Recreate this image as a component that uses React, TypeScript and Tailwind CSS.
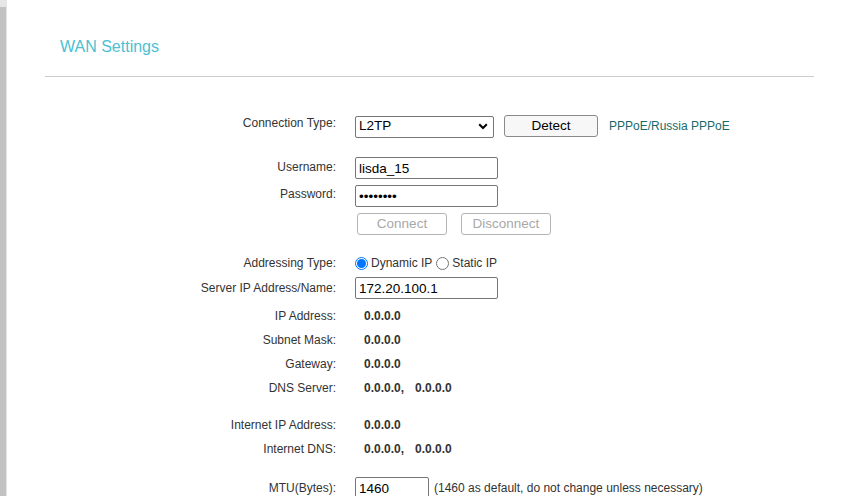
import React from "react";

const font = { fontFamily: '"Liberation Sans", Arial, sans-serif' };

function Row({
    label,
    h,
    labelClass = "",
    children,
}: {
    label: string;
    h: string;
    labelClass?: string;
    children?: React.ReactNode;
}) {
    return (
        <div className={`flex items-center ${h}`}>
            <div className={`w-[291px] shrink-0 text-right text-[12px] text-[#333] ${labelClass}`}>{label}</div>
            <div className="ml-[19px] flex items-center">{children}</div>
        </div>
    );
}

function TextBox({ value, w = "w-[143px]", type = "text" }: { value: string; w?: string; type?: string }) {
    return (
        <input
            readOnly
            type={type}
            defaultValue={value}
            style={font}
            className={`${w} h-[22px] rounded-[2px] border border-[#767676] bg-white px-[3px] text-[13.5px] text-black outline-none`}
        />
    );
}

function Radio({ checked, label }: { checked?: boolean; label: string }) {
    return (
        <label className="flex items-center text-[12px] text-[#333]">
            {checked ? (
                <span className="mr-[3px] flex h-[13px] w-[13px] items-center justify-center rounded-full border border-[#0075ff]">
                    <span className="h-[9px] w-[9px] rounded-full bg-[#0075ff]" />
                </span>
            ) : (
                <span className="mr-[3px] h-[13px] w-[13px] rounded-full border border-[#767676] bg-white" />
            )}
            {label}
        </label>
    );
}

function Value({ children }: { children: React.ReactNode }) {
    return <span className="pl-[9px] text-[12px] font-bold text-[#333]">{children}</span>;
}

export default function App() {
    return (
        <div className="flex h-[496px] w-[841px] overflow-hidden bg-white" style={font}>

            <div className="flex w-[7px] shrink-0 flex-col">
                <div className="h-[7px] bg-[#e6e6e6]" />
                <div className="flex flex-1">
                    <div className="w-[6px] bg-[#c2c2c2]" />
                    <div className="w-[1px] bg-[#e3e3e3]" />
                </div>
            </div>

            <div className="ml-[38px] w-[769px]">

                <h1 className="pl-[15px] pt-[37px] text-[16px] leading-[20px] text-[#4cbfd2]">WAN Settings</h1>

                <div className="mt-[19px] h-px bg-[#cccccc]" />

                <div className="pt-[36px]">

                    <Row label="Connection Type:" h="h-[27px]" labelClass="mb-[7px]">
                        <div className="flex h-[22px] w-[139px] items-center justify-between rounded-[2px] border border-[#767676] bg-white pl-[3px] pr-[5px] text-[13.5px] text-black">
                            <span>L2TP</span>
                            <svg width="10" height="7" viewBox="0 0 10 7">
                                <path d="M1.2 1.3 L5 5 L8.8 1.3" fill="none" stroke="#000" strokeWidth="2" />
                            </svg>
                        </div>
                        <button className="mb-[2px] ml-[10px] h-[22px] w-[94px] rounded-[3px] border border-[#8a8a8a] bg-[#f7f7f7] text-[13.5px] text-black">
                            Detect
                        </button>
                        <span className="mb-[2px] ml-[11px] text-[12px] text-[#1a6a6a]">PPPoE/Russia PPPoE</span>
                    </Row>

                    <div className="h-[14px]" />

                    <Row label="Username:" h="h-[28px]" labelClass="mb-[3px]">
                        <TextBox value="lisda_15" />
                    </Row>
                    <Row label="Password:" h="h-[28px]" labelClass="mb-[4px]">
                        <TextBox value="lisda_15" type="password" />
                    </Row>
                    <Row label="" h="h-[28px]">
                        <button className="ml-[2px] h-[22px] w-[90px] rounded-[3px] border border-[#b5b5b5] bg-white text-[13.5px] text-[#a8a8a8]">
                            Connect
                        </button>
                        <button className="ml-[14px] h-[22px] w-[90px] rounded-[3px] border border-[#b5b5b5] bg-white text-[13.5px] text-[#a8a8a8]">
                            Disconnect
                        </button>
                    </Row>

                    <div className="h-[13px]" />

                    <Row label="Addressing Type:" h="h-[24px]">
                        <Radio checked label="Dynamic IP" />
                        <span className="ml-[4px]" />
                        <Radio label="Static IP" />
                    </Row>
                    <Row label="Server IP Address/Name:" h="h-[26px]">
                        <TextBox value="172.20.100.1" />
                    </Row>

                    <div className="h-[3px]" />

                    <Row label="IP Address:" h="h-[24px]">
                        <Value>0.0.0.0</Value>
                    </Row>
                    <Row label="Subnet Mask:" h="h-[24px]">
                        <Value>0.0.0.0</Value>
                    </Row>
                    <Row label="Gateway:" h="h-[24px]">
                        <Value>0.0.0.0</Value>
                    </Row>
                    <Row label="DNS Server:" h="h-[24px]">
                        <Value>0.0.0.0,</Value>
                        <span className="ml-[11px] text-[12px] font-bold text-[#333]">0.0.0.0</span>
                    </Row>

                    <div className="h-[13px]" />

                    <Row label="Internet IP Address:" h="h-[24px]">
                        <Value>0.0.0.0</Value>
                    </Row>
                    <Row label="Internet DNS:" h="h-[24px]">
                        <Value>0.0.0.0,</Value>
                        <span className="ml-[11px] text-[12px] font-bold text-[#333]">0.0.0.0</span>
                    </Row>

                    <div className="h-[14px]" />

                    <Row label="MTU(Bytes):" h="h-[26px]">
                        <TextBox value="1460" w="w-[74px]" />
                        <span className="ml-[5px] text-[12px] text-[#333]">
                            (1460 as default, do not change unless necessary)
                        </span>
                    </Row>

                </div>

            </div>

        </div>
    );
}
